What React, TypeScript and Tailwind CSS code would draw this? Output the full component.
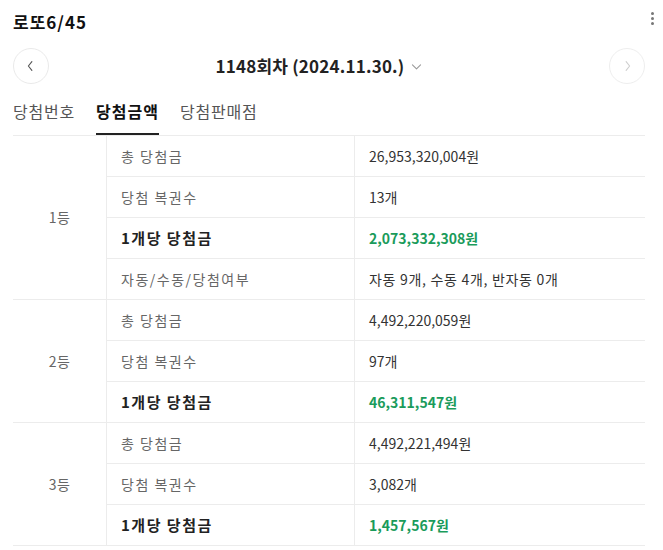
import React from "react";

type Row = { label: string; value: string; strong?: boolean; wide?: boolean };
type Group = { rank: string; rows: Row[] };

const groups: Group[] = [
  {
    rank: "1등",
    rows: [
      { label: "총 당첨금", value: "26,953,320,004원" },
      { label: "당첨 복권수", value: "13개" },
      { label: "1개당 당첨금", value: "2,073,332,308원", strong: true },
      { label: "자동/수동/당첨여부", value: "자동 9개, 수동 4개, 반자동 0개", wide: true },
    ],
  },
  {
    rank: "2등",
    rows: [
      { label: "총 당첨금", value: "4,492,220,059원" },
      { label: "당첨 복권수", value: "97개" },
      { label: "1개당 당첨금", value: "46,311,547원", strong: true },
    ],
  },
  {
    rank: "3등",
    rows: [
      { label: "총 당첨금", value: "4,492,221,494원" },
      { label: "당첨 복권수", value: "3,082개" },
      { label: "1개당 당첨금", value: "1,457,567원", strong: true },
    ],
  },
];

function Chevron({ dir, className }: { dir: "left" | "right" | "down"; className: string }) {
  const d =
    dir === "left" ? "M9 3 5 8l4 5" : dir === "right" ? "M7 3l4 5-4 5" : "M3 6l5 5 5-5";
  return (
    <svg viewBox="0 0 16 16" className={className} fill="none" stroke="currentColor" strokeWidth="1.3">
      <path d={d} strokeLinecap="round" strokeLinejoin="round" />
    </svg>
  );
}

export default function App() {
  return (
    <div className="h-[550px] w-[663px] overflow-hidden bg-white pl-[13px] pr-[18px] font-['Noto_Sans_CJK_KR',sans-serif] text-[#333]">
      <div className="relative flex h-[44px] items-center">
        <h1 className="text-[17px] font-bold tracking-[1px] text-[#111]">로또6/45</h1>
        <div className="absolute right-[-9px] top-[12px] flex flex-col gap-[2px]">
          <span className="h-[3px] w-[3px] rounded-full bg-[#777]"></span>
          <span className="h-[3px] w-[3px] rounded-full bg-[#777]"></span>
          <span className="h-[3px] w-[3px] rounded-full bg-[#777]"></span>
        </div>
      </div>

      <div className="flex h-[44px] items-center justify-between">
        <button className="flex h-[36px] w-[36px] items-center justify-center rounded-full border border-[#eaeaea] bg-white text-[#555]">
          <Chevron dir="left" className="h-[14px] w-[14px]" />
        </button>
        <div className="flex items-center gap-[6px] pr-[19px]">
          <span className="text-[17px] font-semibold tracking-[0.2px] text-[#222]">1148회차 (2024.11.30.)</span>
          <Chevron dir="down" className="h-[13px] w-[13px] text-[#999]" />
        </div>
        <button className="flex h-[36px] w-[36px] items-center justify-center rounded-full border border-[#eeeeee] bg-white text-[#cfcfcf]">
          <Chevron dir="right" className="h-[14px] w-[14px]" />
        </button>
      </div>

      <div className="flex h-[47px] items-stretch gap-[21px] pt-[3px] text-[16px] tracking-[0.8px]">
        <span className="flex items-center pb-[4px] text-[#555]">당첨번호</span>
        <span className="flex items-center border-b-2 border-[#222] pb-[2px] font-bold tracking-[1px] text-[#111]">당첨금액</span>
        <span className="flex items-center pb-[4px] text-[#555]">당첨판매점</span>
      </div>

      <div className="border-t border-[#ececec] text-[14px]">
        {groups.map((g) => (
          <div key={g.rank} className="flex border-b border-[#ececec]">
            <div className="flex w-[94px] items-center justify-center border-r border-[#ececec] tracking-[0.5px] text-[#666]">
              {g.rank}
            </div>
            <div className="flex-1">
              {g.rows.map((r, i) => (
                <div
                  key={r.label}
                  className={
                    i < g.rows.length - 1
                      ? "flex h-[41px] border-b border-[#ececec]"
                      : "flex h-[40px]"
                  }
                >
                  <div
                    className={
                      r.strong
                        ? "flex w-[248px] items-center border-r border-[#ececec] pl-[14px] text-[15px] font-bold tracking-[1.5px] text-[#222]"
                        : "flex w-[248px] items-center border-r border-[#ececec] pl-[14px] tracking-[1.5px] text-[#666]"
                    }
                  >
                    {r.label}
                  </div>
                  <div
                    className={
                      r.strong
                        ? "flex flex-1 items-center pl-[14px] font-bold text-[#1a9b5b]"
                        : r.wide
                          ? "flex flex-1 items-center pl-[14px] tracking-[0.7px] text-[#333]"
                          : "flex flex-1 items-center pl-[14px] text-[#333]"
                    }
                  >
                    {r.value}
                  </div>
                </div>
              ))}
            </div>
          </div>
        ))}
      </div>
    </div>
  );
}
